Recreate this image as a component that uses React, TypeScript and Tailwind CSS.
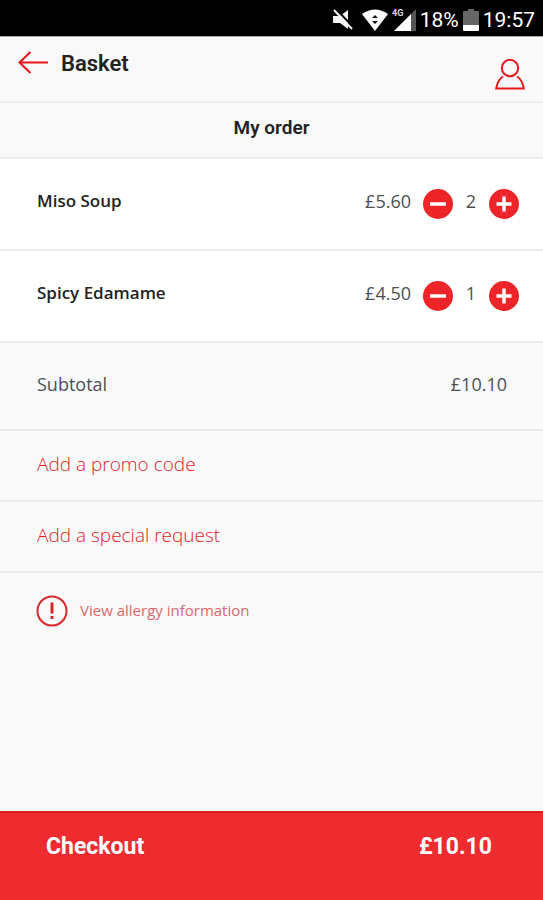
import { useState } from "react";

interface Item {
	id: string;
	name: string;
	price: number;
	quantity: number;
}

const initialItems: Item[] = [
	{ id: "miso", name: "Miso Soup", price: 560, quantity: 2 },
	{ id: "edamame", name: "Spicy Edamame", price: 450, quantity: 1 },
];

const total = 1010;

const formatPrice = (pence: number) => `£${(pence / 100).toFixed(2)}`;

const StatusBar = () => (
	<div className="flex h-9 items-center justify-end bg-black pr-2 pt-1 font-['Roboto',sans-serif] text-[21px] leading-6 text-white">
		<svg width="22" height="22" viewBox="0 0 22 22" fill="none" aria-hidden="true">
			<path d="M1 7h7l8-6v19l-8-6H1z" fill="#f4f4f4" />
			<path d="M4 0l17 18" stroke="#000" strokeWidth="2" />
			<path d="M2 1l18 19" stroke="#f4f4f4" strokeWidth="2" />
		</svg>
		<svg className="ml-2" width="26" height="22" viewBox="0 0 26 22" aria-hidden="true">
			<path d="M0 5Q13-4 26 5L13 22z" fill="#fff" />
			<path d="M10 9l3-3 3 3zM10 12l3 3 3-3z" fill="#111" />
		</svg>
		<svg className="ml-1" width="24" height="24" viewBox="0 0 24 24" aria-hidden="true">
			<path d="M24 1v22h-5V6z" fill="#555" />
			<path d="M19 6v17H2z" fill="#fff" />
			<text x="0" y="8" fontSize="9" fontWeight="700" fill="#ddd">
				4G
			</text>
		</svg>
		<span className="ml-1">18%</span>
		<svg className="ml-1 mr-1" width="16" height="22" viewBox="0 0 16 22" aria-hidden="true">
			<path d="M5 0h6v2h4q1 0 1 1v14H0V3q0-1 1-1h4z" fill="#666" />
			<path d="M0 16h16v5q0 1-1 1H1q-1 0-1-1z" fill="#fff" />
		</svg>
		<span>19:57</span>
	</div>
);

interface StepButtonProps {
	label: string;
	plus?: boolean;
	onClick: () => void;
}

const StepButton = ({ label, plus, onClick }: StepButtonProps) => (
	<button type="button" aria-label={label} onClick={onClick} className="shrink-0">
		<svg width="30" height="30" viewBox="0 0 30 30" aria-hidden="true">
			<circle cx="15" cy="15" r="15" fill="#ee2528" />
			<path
				d={plus ? "M7.5 15h15M15 7.5v15" : "M7 15h16"}
				stroke="#fff"
				strokeWidth="3.5"
			/>
		</svg>
	</button>
);

const App = () => {
	const [items, setItems] = useState(initialItems);

	const changeQuantity = (id: string, by: number) => {
		setItems((current) =>
			current.map((item) =>
				item.id === id
					? { ...item, quantity: Math.max(0, item.quantity + by) }
					: item
			)
		);
	};

	return (
		<div className="flex min-h-screen flex-col bg-[#f9f9f9] font-['Open_Sans',sans-serif] text-lg leading-6 text-[#4c5054]">
			<StatusBar />
			<header className="flex h-[67px] items-start justify-between border-b-2 border-t border-b-[#eeeeee] border-t-[#aaaaaa] px-[18px] font-['Roboto',sans-serif]">
				<div className="flex items-center gap-3 pt-[11px]">
					<button type="button" aria-label="Back" className="pb-1">
						<svg
							width="31"
							height="24"
							viewBox="0 0 31 24"
							fill="none"
							stroke="#ea1519"
							strokeWidth="2"
							aria-hidden="true"
						>
							<path d="M30 12.500H2M12.500 2L1.500 12.500l11 10.500" />
						</svg>
					</button>
					<h1 className="text-[22px] font-semibold leading-8 text-[#222222]">Basket</h1>
				</div>
				<button type="button" aria-label="Account" className="pt-[22px]">
					<svg
						width="30"
						height="32"
						viewBox="0 0 30 32"
						fill="none"
						stroke="#e3191c"
						strokeWidth="2"
						aria-hidden="true"
					>
						<circle cx="15" cy="9" r="8.200" />
						<path d="M8 17.500C4 20 2 25 1.200 29.500h27.600C28 25 26 20 22 17.500" />
					</svg>
				</button>
			</header>

			<main className="flex-1">
				<h2 className="flex h-14 items-center justify-center border-b-2 border-[#eeeeee] pb-1 font-['Roboto',sans-serif] text-[19px] font-semibold text-[#222222]">
					My order
				</h2>
				<ul>
					{items.map((item) => (
						<li
							key={item.id}
							className="flex h-[92px] items-center border-b-2 border-[#ebebeb] bg-white pl-[37px] pr-6"
						>
							<span className="flex-1 pb-1.5 text-[17px] font-semibold text-[#222222]">
								{item.name}
							</span>
							<span className="pb-1.5 pr-3">{formatPrice(item.price)}</span>
							<StepButton
								label={`Remove one ${item.name}`}
								onClick={() => changeQuantity(item.id, -1)}
							/>
							<span className="w-9 pb-1.5 text-center">{item.quantity}</span>
							<StepButton
								plus
								label={`Add one ${item.name}`}
								onClick={() => changeQuantity(item.id, 1)}
							/>
						</li>
					))}
				</ul>
				<div className="flex h-[88px] items-center justify-between border-b-2 border-[#ebebeb] pb-1 pl-[37px] pr-9">
					<span>Subtotal</span>
					<span>{formatPrice(total)}</span>
				</div>
				<button
					type="button"
					className="flex h-[71px] w-full items-center border-b-2 border-[#ebebeb] px-[37px] pb-1 text-[19px] font-light text-[#e5191e]"
				>
					Add a promo code
				</button>
				<button
					type="button"
					className="flex h-[71px] w-full items-center border-b-2 border-[#ebebeb] px-[37px] pb-1 text-[19px] font-light text-[#e5191e]"
				>
					Add a special request
				</button>
				<a
					href="#allergy"
					className="flex items-center gap-3 px-9 py-[22px] text-[15px] text-[#d9686c]"
				>
					<svg width="32" height="32" viewBox="0 0 32 32" fill="none" stroke="#d9272b" aria-hidden="true">
						<circle cx="16" cy="16" r="14.500" strokeWidth="2" />
						<path d="M16 7.500v11M16 21v3" strokeWidth="3" />
					</svg>
					<span className="pb-0.5">View allergy information</span>
				</a>
			</main>

			<button
				type="button"
				className="flex h-[89px] items-start justify-between border-t-2 border-[#dc1c20] bg-[#ee2b2f] pl-[46px] pr-[51px] pt-5 font-['Roboto',sans-serif] text-[23px] font-bold leading-7 text-white"
			>
				<span>Checkout</span>
				<span>{formatPrice(total)}</span>
			</button>
		</div>
	);
};

export default App;
